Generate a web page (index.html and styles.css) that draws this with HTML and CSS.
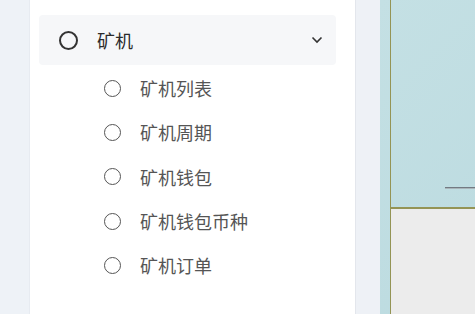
FILE: index.html
```html
<!DOCTYPE html>
<html lang="zh-CN">
<head>
    <meta charset="UTF-8">
    <meta name="viewport" content="width=device-width, initial-scale=1.0">
    <title>矿机</title>
    <link rel="stylesheet" href="styles.css">
</head>
<body>
    <div class="gutter"></div>
    <aside class="sidebar">
        <div class="menu-head">
            <span class="ring big"></span>
            <span class="menu-title">矿机</span>
            <svg class="chevron" width="12" height="8" viewBox="0 0 12 8">
                <path d="M1.5 1.5 L6 6 L10.5 1.5" fill="none" stroke="#333" stroke-width="1.6"/>
            </svg>
        </div>
        <ul class="submenu">
            <li><span class="ring"></span>矿机列表</li>
            <li><span class="ring"></span>矿机周期</li>
            <li><span class="ring"></span>矿机钱包</li>
            <li><span class="ring"></span>矿机钱包币种</li>
            <li><span class="ring"></span>矿机订单</li>
        </ul>
    </aside>
    <div class="strip"></div>
    <main class="canvas">
        <div class="panel">
            <div class="panel-top"><div class="rule"></div></div>
            <div class="panel-bottom"></div>
        </div>
    </main>
</body>
</html>
```

FILE: styles.css
```css
* {
    box-sizing: border-box;
}
html, body {
    height: 100%;
}
body {
    margin: 0;
    display: flex;
    font-family: "Noto Sans CJK SC", "Noto Sans", sans-serif;
    background: #eef2f7;
    overflow: hidden;
}
.gutter {
    width: 30px;
    flex: none;
    background: #eef2f7;
    border-right: 1px solid #e7ebf1;
}
.sidebar {
    width: 326px;
    flex: none;
    background: #fff;
    padding: 15px 19px 0 9px;
    border-right: 1px solid #e3e6ec;
}
.menu-head {
    display: flex;
    align-items: center;
    height: 50px;
    padding: 0 13px 0 20px;
    background: #f6f7f9;
    border-radius: 4px;
}
.menu-title {
    flex: 1;
    margin-left: 19px;
    font-size: 18px;
    color: #2b2b2b;
}
.chevron {
    display: block;
}
.ring {
    width: 17px;
    height: 17px;
    border: 1.5px solid #555;
    border-radius: 50%;
    flex: none;
}
.ring.big {
    width: 19px;
    height: 19px;
    border: 2px solid #333;
}
.submenu {
    list-style: none;
    margin: 1px 0 0;
    padding: 0;
}
.submenu li {
    display: flex;
    align-items: center;
    height: 44.3px;
    padding-left: 65px;
    font-size: 18px;
    color: #555;
}
.submenu .ring {
    margin-right: 19px;
}
.strip {
    width: 24px;
    flex: none;
    background: #eef1f6;
}
.canvas {
    flex: 1;
    background: linear-gradient(135deg, #c4e0e4, #bcdbe0);
    padding-left: 10px;
}
.panel {
    height: 100%;
    border-left: 1px solid #949455;
    display: flex;
    flex-direction: column;
}
.panel-top {
    flex: none;
    height: 209px;
    padding-top: 187px;
    border-bottom: 2px solid #949455;
}
.rule {
    margin-left: 54px;
    height: 1px;
    background: #737a82;
    box-shadow: 0 1px 0 #a9b5ba;
}
.panel-bottom {
    flex: 1;
    background: #ececec;
}
```
